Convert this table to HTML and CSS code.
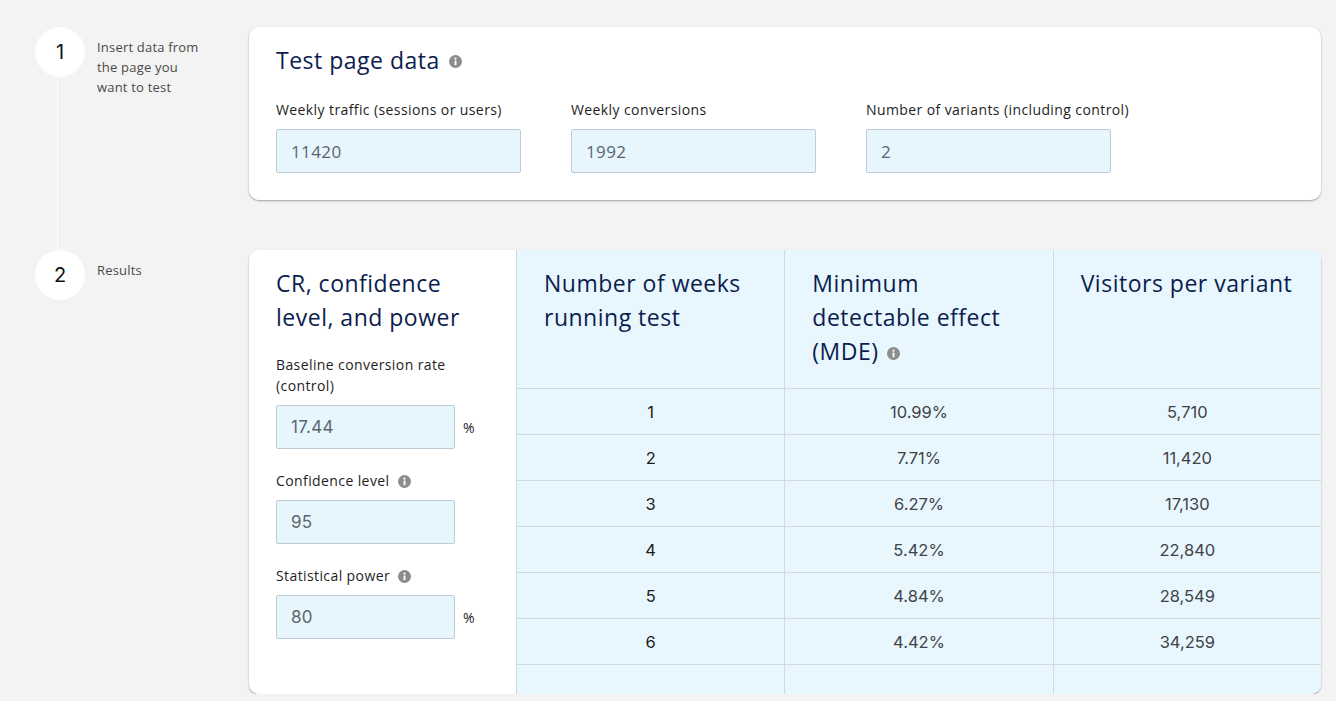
FILE: index.html
```html
<!DOCTYPE html>
<html lang="en">
<head>
<meta charset="utf-8">
<title>Sample size calculator</title>
<link rel="stylesheet" href="styles.css">
</head>
<body>
<main class="steps">
  <div class="timeline-line"></div>

  <section class="step step-one">
    <div class="step-marker">
      <div class="step-circle">1</div>
    </div>
    <p class="step-label">Insert data from the page you want to test</p>
    <div class="card card-data">
      <h2 class="card-title">Test page data <svg class="info" viewBox="0 0 14 14"><circle cx="7" cy="7" r="7" fill="#8c8c8c"/><circle cx="7" cy="4" r="1.2" fill="#fff"/><rect x="6" y="6" width="2" height="5" rx="0.6" fill="#fff"/></svg></h2>
      <div class="field-row">
        <div class="field">
          <label class="field-label">Weekly traffic (sessions or users)</label>
          <div class="input">11420</div>
        </div>
        <div class="field">
          <label class="field-label">Weekly conversions</label>
          <div class="input">1992</div>
        </div>
        <div class="field">
          <label class="field-label">Number of variants (including control)</label>
          <div class="input">2</div>
        </div>
      </div>
    </div>
  </section>

  <section class="step step-two">
    <div class="step-marker">
      <div class="step-circle">2</div>
    </div>
    <p class="step-label">Results</p>
    <div class="card card-results">
      <div class="params">
        <h2 class="params-title">CR, confidence level, and power</h2>
        <label class="field-label param-label">Baseline conversion rate (control)</label>
        <div class="param-input-row">
          <div class="input input-small">17.44</div><span class="unit">%</span>
        </div>
        <label class="field-label param-label gap">Confidence level <svg class="info info-sm" viewBox="0 0 14 14"><circle cx="7" cy="7" r="7" fill="#8c8c8c"/><circle cx="7" cy="4" r="1.2" fill="#fff"/><rect x="6" y="6" width="2" height="5" rx="0.6" fill="#fff"/></svg></label>
        <div class="param-input-row">
          <div class="input input-small">95</div>
        </div>
        <label class="field-label param-label gap">Statistical power <svg class="info info-sm" viewBox="0 0 14 14"><circle cx="7" cy="7" r="7" fill="#8c8c8c"/><circle cx="7" cy="4" r="1.2" fill="#fff"/><rect x="6" y="6" width="2" height="5" rx="0.6" fill="#fff"/></svg></label>
        <div class="param-input-row">
          <div class="input input-small">80</div><span class="unit">%</span>
        </div>
      </div>
      <div class="results-table">
        <div class="th">Number of weeks running test</div>
        <div class="th">Minimum detectable effect (MDE) <svg class="info info-head" viewBox="0 0 14 14"><circle cx="7" cy="7" r="7" fill="#8c8c8c"/><circle cx="7" cy="4" r="1.2" fill="#fff"/><rect x="6" y="6" width="2" height="5" rx="0.6" fill="#fff"/></svg></div>
        <div class="th">Visitors per variant</div>

        <div class="td td-week">1</div><div class="td">10.99%</div><div class="td">5,710</div>
        <div class="td td-week">2</div><div class="td">7.71%</div><div class="td">11,420</div>
        <div class="td td-week">3</div><div class="td">6.27%</div><div class="td">17,130</div>
        <div class="td td-week">4</div><div class="td">5.42%</div><div class="td">22,840</div>
        <div class="td td-week">5</div><div class="td">4.84%</div><div class="td">28,549</div>
        <div class="td td-week">6</div><div class="td">4.42%</div><div class="td">34,259</div>
        <div class="tf"></div><div class="tf"></div><div class="tf"></div>
      </div>
    </div>
  </section>
</main>
</body>
</html>
```

FILE: styles.css
```css
* { box-sizing: border-box; }

html, body {
  margin: 0;
  padding: 0;
  background: #f3f3f3;
  font-family: "Open Sans", "Noto Sans", sans-serif;
  color: #222;
}

.steps {
  position: relative;
  padding: 27px 15px 0 35px;
}

.timeline-line {
  position: absolute;
  left: 57px;
  top: 77px;
  width: 1px;
  height: 173px;
  background: #ffffff;
}

.step {
  display: grid;
  grid-template-columns: 50px 140px 1fr;
  column-gap: 12px;
  align-items: start;
}

.step-two { margin-top: 50px; }

.step-marker { position: relative; z-index: 1; }

.step-circle {
  width: 50px;
  height: 50px;
  border-radius: 50%;
  background: #fff;
  display: flex;
  align-items: center;
  justify-content: center;
  font-family: "Inter", sans-serif;
  font-size: 20px;
  color: #111;
}

.step-label {
  margin: 10px 0 0;
  width: 108px;
  font-size: 13px;
  letter-spacing: 0.2px;
  line-height: 20px;
  color: #4a4a4a;
}

.card {
  background: #fff;
  border-radius: 10px;
  box-shadow: 0 1px 2px rgba(0,0,0,0.35);
  overflow: hidden;
}

.card-data {
  padding: 16px 27px 27px;
}

.card-title, .params-title {
  margin: 0;
  font-weight: 400;
  font-size: 23px;
  letter-spacing: 0.5px;
  line-height: 34px;
  color: #0c1d4e;
}

.info {
  width: 13px;
  height: 13px;
  vertical-align: middle;
  position: relative;
  top: -1px;
  margin-left: 3px;
}

.info-sm { width: 13px; height: 13px; margin-left: 4px; }
.info-head { width: 13px; height: 13px; margin-left: 2px; top: 0; }

.field-row {
  display: flex;
  gap: 50px;
  margin-top: 22px;
}

.field { width: 245px; }

.field-label {
  display: block;
  font-size: 14px;
  letter-spacing: 0.4px;
  line-height: 21px;
  color: #1e1e1e;
  white-space: nowrap;
}

.input {
  margin-top: 9px;
  height: 44px;
  width: 245px;
  background: #e7f6fd;
  border: 1px solid #bccbd5;
  border-radius: 2px;
  padding-left: 14px;
  display: flex;
  align-items: center;
  font-size: 17px;
  letter-spacing: 0.4px;
  color: #5a6570;
}

.card-results {
  display: grid;
  grid-template-columns: 267px 1fr;
}

.params {
  padding: 16px 27px 55px;
}

.params-title { width: 210px; }

.param-label { margin-top: 20px; white-space: normal; }
.param-label.gap { margin-top: 21px; }

.param-input-row {
  display: flex;
  align-items: center;
  gap: 8px;
}

.input-small {
  width: 179px;
  font-family: "Inter", sans-serif;
  font-size: 17px;
  letter-spacing: 0.3px;
  margin-top: 9px;
}

.unit {
  margin-top: 9px;
  font-size: 14px;
  color: #222;
}

.results-table {
  display: grid;
  grid-template-columns: repeat(3, 1fr);
  grid-template-rows: 139px repeat(6, 46px) 1fr;
  background: #e8f7fd;
}

.th, .td, .tf {
  border-left: 1px solid #d3dadd;
}

.th {
  padding: 16px 27px 0;
  font-size: 23px;
  letter-spacing: 0.5px;
  line-height: 34px;
  color: #0c1d4e;
  border-bottom: 1px solid #d3dadd;
}

.td {
  display: flex;
  align-items: center;
  justify-content: center;
  font-family: "Inter", sans-serif;
  font-size: 16.5px;
  color: #3f4348;
  border-bottom: 1px solid #d3dadd;
}

.td-week { color: #1c1c1c; }
```
